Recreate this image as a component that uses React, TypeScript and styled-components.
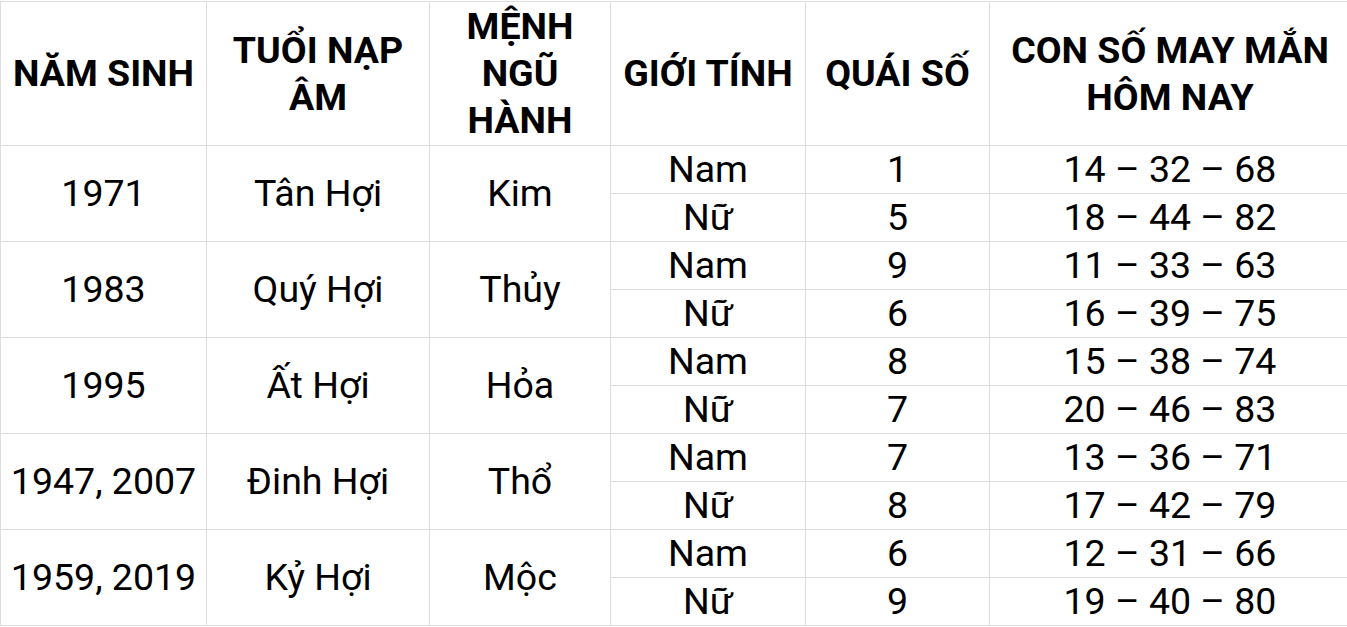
import styled, { createGlobalStyle } from "styled-components";

const GlobalStyle = createGlobalStyle`
  html, body {
    margin: 0;
    padding: 0;
    background: #fff;
    overflow: hidden;
  }
  body {
    font-family: Roboto, "Noto Sans", sans-serif;
    color: #000;
  }
`;

const Table = styled.table`
  border-collapse: collapse;
  table-layout: fixed;
  width: 1350px;
  margin-top: 1px;
  font-size: 37.5px;
  line-height: 47px;
`;

const HeadCell = styled.th`
  border: 1px solid #dedede;
  height: 143px;
  padding: 0 2px;
  font-weight: 700;
  text-align: center;
  vertical-align: middle;
`;

const Cell = styled.td`
  border: 1px solid #dedede;
  height: 47px;
  padding: 0;
  text-align: center;
  vertical-align: middle;
  white-space: nowrap;
`;

const widths = [206, 223, 181, 195, 184, 361];

const headers = [
  "NĂM SINH",
  "TUỔI NẠP ÂM",
  "MỆNH NGŨ HÀNH",
  "GIỚI TÍNH",
  "QUÁI SỐ",
  "CON SỐ MAY MẮN HÔM NAY",
];

type Group = {
  year: string;
  age: string;
  element: string;
  male: [string, string];
  female: [string, string];
};

const groups: Group[] = [
  { year: "1971", age: "Tân Hợi", element: "Kim", male: ["1", "14 – 32 – 68"], female: ["5", "18 – 44 – 82"] },
  { year: "1983", age: "Quý Hợi", element: "Thủy", male: ["9", "11 – 33 – 63"], female: ["6", "16 – 39 – 75"] },
  { year: "1995", age: "Ất Hợi", element: "Hỏa", male: ["8", "15 – 38 – 74"], female: ["7", "20 – 46 – 83"] },
  { year: "1947, 2007", age: "Đinh Hợi", element: "Thổ", male: ["7", "13 – 36 – 71"], female: ["8", "17 – 42 – 79"] },
  { year: "1959, 2019", age: "Kỷ Hợi", element: "Mộc", male: ["6", "12 – 31 – 66"], female: ["9", "19 – 40 – 80"] },
];

export default function App() {
  return (
    <>
      <GlobalStyle />
      <Table>
        <colgroup>
          {widths.map((w, i) => (
            <col key={i} style={{ width: w }} />
          ))}
        </colgroup>
        <thead>
          <tr>
            {headers.map((h) => (
              <HeadCell key={h}>{h}</HeadCell>
            ))}
          </tr>
        </thead>
        <tbody>
          {groups.map((g) => [
            <tr key={g.year + "m"}>
              <Cell rowSpan={2}>{g.year}</Cell>
              <Cell rowSpan={2}>{g.age}</Cell>
              <Cell rowSpan={2}>{g.element}</Cell>
              <Cell>Nam</Cell>
              <Cell>{g.male[0]}</Cell>
              <Cell>{g.male[1]}</Cell>
            </tr>,
            <tr key={g.year + "f"}>
              <Cell>Nữ</Cell>
              <Cell>{g.female[0]}</Cell>
              <Cell>{g.female[1]}</Cell>
            </tr>,
          ])}
        </tbody>
      </Table>
    </>
  );
}
